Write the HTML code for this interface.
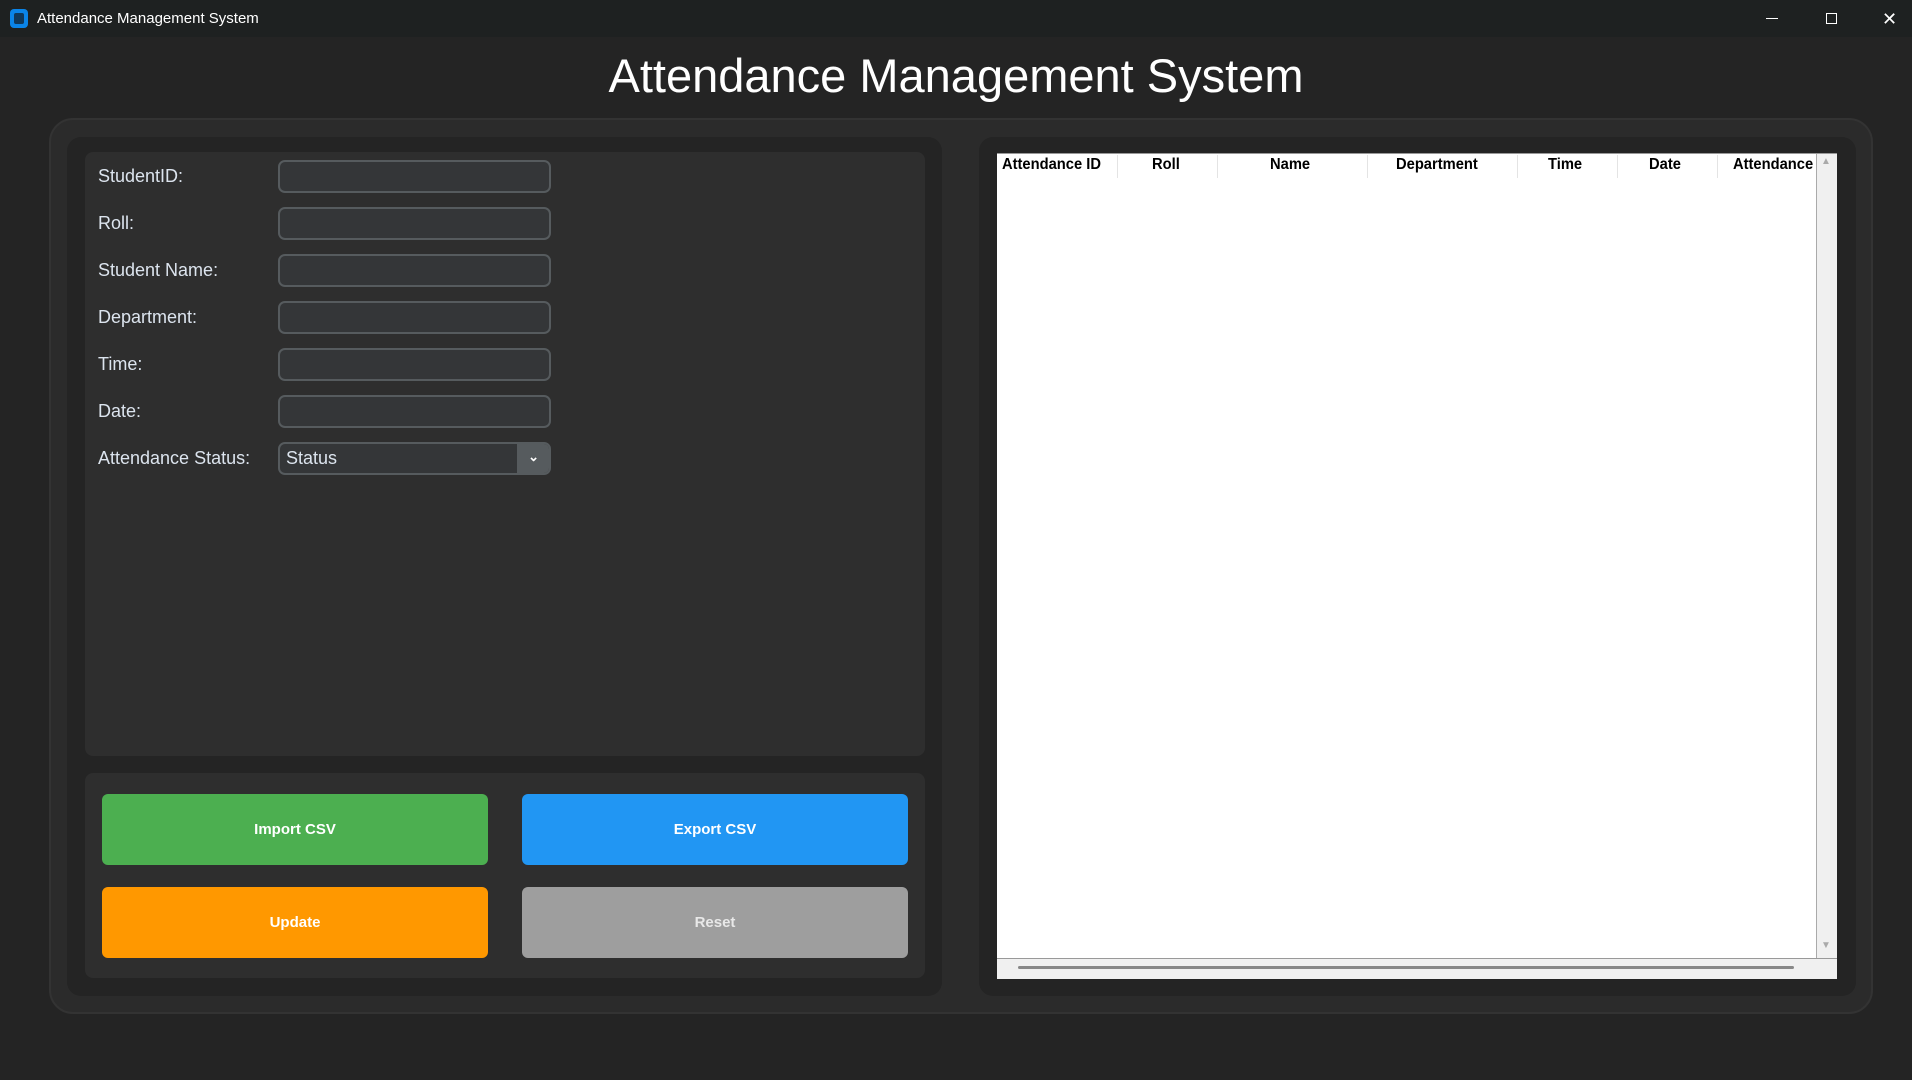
<!DOCTYPE html>
<html><head><meta charset="utf-8"><style>
*{margin:0;padding:0;box-sizing:border-box}
body{width:1912px;height:1080px;background:#242424;font-family:"Liberation Sans",sans-serif;position:relative;overflow:hidden;color:#dce4ee}
.a{position:absolute}
.tb{left:0;top:0;width:1912px;height:37px;background:#1e2121;}
.lbl{position:absolute;left:98px;font-size:18px;color:#dce4ee;line-height:20px}
.ent{position:absolute;left:278px;width:273px;height:33px;background:#343638;border:2px solid #565b5e;border-radius:7px}
.btn{position:absolute;width:386px;height:71px;border-radius:6px;color:#fff;font-weight:bold;font-size:15px;display:flex;align-items:center;justify-content:center}
.th{position:absolute;top:156px;font-weight:bold;font-size:16px;color:#000;transform:scaleX(0.92);transform-origin:left;white-space:nowrap}
.dv{position:absolute;top:155px;width:1px;height:23px;background:#e4e4e4}
</style></head><body>
<div class="a tb"></div>
<div class="a" style="left:10px;top:9px;width:18px;height:19px;background:#0a84e8;border-radius:4px"></div>
<div class="a" style="left:14px;top:13px;width:10px;height:11px;background:#10385a;border-radius:2px"></div>
<div class="a" style="left:37px;top:10px;font-size:15px;color:#fff">Attendance Management System</div>
<div class="a" style="left:1766px;top:18px;width:12px;height:1px;background:#fff"></div>
<div class="a" style="left:1826px;top:13px;width:11px;height:11px;border:1px solid #fff"></div>
<div class="a" style="left:1882px;top:9px;font-size:18px;color:#fff">✕</div>
<div class="a" style="left:0;top:48px;width:1912px;text-align:center;font-size:47px;color:#fff">Attendance Management System</div>

<div class="a" style="left:49px;top:118px;width:1824px;height:896px;background:#2b2b2b;border:2px solid #333;border-radius:24px"></div>
<div class="a" style="left:67px;top:137px;width:875px;height:859px;background:#242424;border-radius:14px"></div>
<div class="a" style="left:85px;top:152px;width:840px;height:604px;background:#2e2e2e;border-radius:8px"></div>
<div class="lbl" style="top:166px">StudentID:</div>
<div class="lbl" style="top:213px">Roll:</div>
<div class="lbl" style="top:260px">Student Name:</div>
<div class="lbl" style="top:307px">Department:</div>
<div class="lbl" style="top:354px">Time:</div>
<div class="lbl" style="top:401px">Date:</div>
<div class="lbl" style="top:448px">Attendance Status:</div>
<div class="ent" style="top:160px"></div>
<div class="ent" style="top:207px"></div>
<div class="ent" style="top:254px"></div>
<div class="ent" style="top:301px"></div>
<div class="ent" style="top:348px"></div>
<div class="ent" style="top:395px"></div>
<div class="ent" style="top:442px;overflow:hidden"><div class="a" style="left:6px;top:4px;font-size:18px;color:#dce4ee">Status</div><div class="a" style="right:0;top:0;width:32px;height:29px;background:#565b5e"></div><div class="a" style="right:10px;top:5px;font-size:13px;color:#fff;font-weight:bold">⌄</div></div>

<div class="a" style="left:85px;top:773px;width:840px;height:205px;background:#2e2e2e;border-radius:8px"></div>
<div class="btn" style="left:102px;top:794px;background:#4caf50">Import CSV</div>
<div class="btn" style="left:522px;top:794px;background:#2196f3">Export CSV</div>
<div class="btn" style="left:102px;top:887px;background:#ff9800">Update</div>
<div class="btn" style="left:522px;top:887px;background:#9e9e9e;color:#e8e8e8">Reset</div>

<div class="a" style="left:979px;top:137px;width:877px;height:859px;background:#242424;border-radius:14px"></div>
<div class="a" style="left:997px;top:153px;width:840px;height:826px;background:#fff;border-top:1px solid #999"></div>
<div class="a" style="left:1816px;top:154px;width:21px;height:825px;background:#f0f0f0;border-left:1px solid #aaa"></div>
<div class="a" style="left:997px;top:958px;width:840px;height:21px;background:#f0f0f0;border-top:1px solid #999"></div>
<div class="a" style="left:1018px;top:966px;width:776px;height:3px;background:#888;border-radius:2px"></div>
<div class="a" style="left:1821px;top:156px;font-size:10px;color:#aaa">▲</div>
<div class="a" style="left:1821px;top:940px;font-size:10px;color:#aaa">▼</div>
<div class="dv" style="left:1117px"></div><div class="dv" style="left:1217px"></div><div class="dv" style="left:1367px"></div><div class="dv" style="left:1517px"></div><div class="dv" style="left:1617px"></div><div class="dv" style="left:1717px"></div>
<div class="th" style="left:1002px">Attendance ID</div>
<div class="th" style="left:1152px">Roll</div>
<div class="th" style="left:1270px">Name</div>
<div class="th" style="left:1396px">Department</div>
<div class="th" style="left:1548px">Time</div>
<div class="th" style="left:1649px">Date</div>
<div class="a" style="left:1733px;top:155px;width:83px;height:22px;overflow:hidden"><div class="th" style="left:0;top:1px">Attendance</div></div>
</body></html>
